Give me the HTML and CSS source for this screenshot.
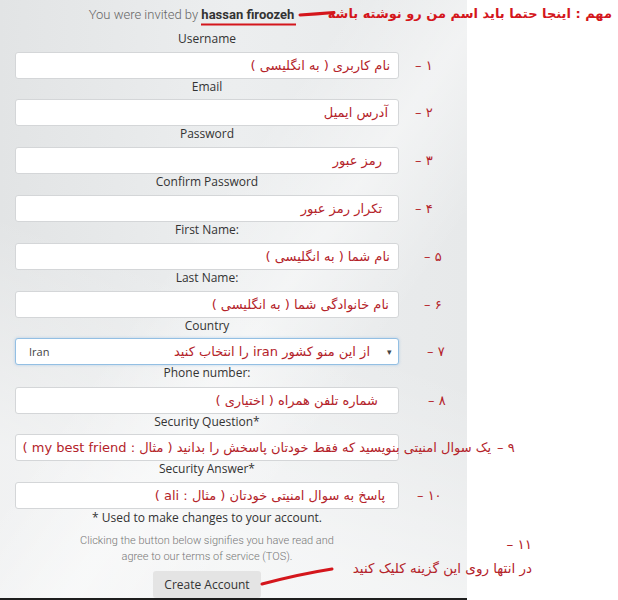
FILE: index.html
```html
<!DOCTYPE html>
<html lang="en">
<head>
    <meta charset="UTF-8">
    <meta name="viewport" content="width=device-width, initial-scale=1.0">
    <title>Register</title>
    <link rel="stylesheet" href="styles.css">
</head>
<body>

<div class="page">
    <div class="panel">
        <div class="form">
            <p class="invite">You were invited by <b>hassan firoozeh</b></p>

            <div class="field">
                <div class="label">Username</div>
                <div class="box"></div>
                <span class="note" style="right: 9px">نام کاربری ( به انگلیسی )</span>
                <span class="num" style="left: 400px">۱ –</span>
            </div>
            <div class="field">
                <div class="label tight">Email</div>
                <div class="box"></div>
                <span class="note" style="right: 11px">آدرس ایمیل</span>
                <span class="num" style="left: 400px">۲ –</span>
            </div>
            <div class="field">
                <div class="label">Password</div>
                <div class="box"></div>
                <span class="note" style="right: 17px">رمز عبور</span>
                <span class="num" style="left: 400px">۳ –</span>
            </div>
            <div class="field">
                <div class="label">Confirm Password</div>
                <div class="box"></div>
                <span class="note" style="right: 17px">تکرار رمز عبور</span>
                <span class="num" style="left: 400px">۴ –</span>
            </div>
            <div class="field">
                <div class="label">First Name:</div>
                <div class="box"></div>
                <span class="note" style="right: 9px">نام شما ( به انگلیسی )</span>
                <span class="num" style="left: 409px">۵ –</span>
            </div>
            <div class="field">
                <div class="label">Last Name:</div>
                <div class="box"></div>
                <span class="note" style="right: 10px">نام خانوادگی شما ( به انگلیسی )</span>
                <span class="num" style="left: 409px">۶ –</span>
            </div>
            <div class="field">
                <div class="label tight">Country</div>
                <div class="box select">
                    <span>Iran</span>
                    <span class="caret">▾</span>
                </div>
                <span class="note" style="right: 29px">از این منو کشور iran را انتخاب کنید</span>
                <span class="num" style="left: 412px">۷ –</span>
            </div>
            <div class="field">
                <div class="label loose">Phone number:</div>
                <div class="box"></div>
                <span class="note" style="right: 21px">شماره تلفن همراه ( اختیاری )</span>
                <span class="num" style="left: 413px">۸ –</span>
            </div>
            <div class="field">
                <div class="label tight">Security Question*</div>
                <div class="box"></div>
                <span class="note" style="right: -92px">یک سوال امنیتی بنویسید که فقط خودتان پاسخش را بدانید ( مثال : my best friend )</span>
                <span class="num" style="left: 482px">۹ –</span>
            </div>
            <div class="field">
                <div class="label">Security Answer*</div>
                <div class="box"></div>
                <span class="note" style="right: 14px">پاسخ به سوال امنیتی خودتان ( مثال : ali )</span>
                <span class="num" style="left: 402px">۱۰ –</span>
            </div>

            <p class="used">* Used to make changes to your account.</p>
            <p class="tos">Clicking the button below signifies you have read and<br>agree to our terms of service (TOS).</p>
            <div class="actions">
                <button class="create">Create Account</button>
            </div>
        </div>
    </div>

    <div class="top-note" dir="rtl">مهم : اینجا حتما باید اسم من رو نوشته باشه</div>
    <div class="end-note" dir="rtl">
        <div>۱۱ –</div>
        <div>در انتها روی این گزینه کلیک کنید</div>
    </div>

    <svg class="marks" width="618" height="600" viewBox="0 0 618 600">
        <path d="M201 24.5 L296 24.5" stroke="#d4161c" stroke-width="2.2" fill="none"/>
        <path d="M300 15 Q316 14 334 12.5" stroke="#d4161c" stroke-width="3" stroke-linecap="round" fill="none"/>
        <path d="M262 584 Q300 574 332 569" stroke="#d4161c" stroke-width="3" stroke-linecap="round" fill="none"/>
    </svg>
</div>

</body>
</html>
```

FILE: styles.css
```css
body {
    margin: 0;
    background: #fff;
    font-family: "Open Sans", Arial, sans-serif;
}
.page {
    position: relative;
    width: 618px;
    height: 600px;
    overflow: hidden;
}
.panel {
    width: 467px;
    height: 600px;
    box-sizing: border-box;
    border-bottom: 2px solid #1e1e1e;
    background:
        linear-gradient(125deg, rgba(255,255,255,0) 40%, rgba(255,255,255,0.45) 55%, rgba(255,255,255,0) 70%),
        linear-gradient(200deg, rgba(255,255,255,0) 50%, rgba(255,255,255,0.5) 80%),
        linear-gradient(90deg, #e2e4e5 0%, #eceeef 50%, #e7e9ea 100%);
}
.form {
    width: 384px;
    margin-left: 15px;
}
.invite {
    margin: 0;
    height: 31px;
    padding-right: 31px;
    line-height: 30px;
    text-align: center;
    font-family: Roboto, Arial, sans-serif;
    font-size: 13px;
    font-weight: 300;
    color: #666;
}
.invite b {
    font-weight: 700;
    color: #333;
}
.field {
    position: relative;
}
.label {
    height: 21px;
    line-height: 15px;
    text-align: center;
    font-size: 12px;
    color: #333;
}
.label.tight {
    height: 20px;
}
.label.loose {
    height: 22px;
}
.box {
    height: 27px;
    box-sizing: border-box;
    background: #fff;
    border: 1px solid #d4d6d8;
    border-radius: 3px;
}
.select {
    display: flex;
    justify-content: space-between;
    align-items: center;
    padding: 0 6px 0 13px;
    border-color: #93bfe3;
    box-shadow: 0 0 3px rgba(80, 150, 220, 0.35);
    font-size: 11px;
    color: #444;
}
.caret {
    font-size: 9px;
    color: #444;
}
.note,
.num {
    position: absolute;
    bottom: 4px;
    white-space: nowrap;
    font-family: "DejaVu Sans", sans-serif;
    font-size: 13px;
    line-height: 18px;
    color: #b4232a;
}
.note {
    direction: rtl;
}
.num {
    direction: rtl;
}
.used {
    margin: 0;
    line-height: 17px;
    text-align: center;
    font-size: 12px;
    color: #333;
}
.tos {
    margin: 7px 0 0;
    line-height: 16px;
    text-align: center;
    font-family: Roboto, Arial, sans-serif;
    font-size: 11px;
    font-weight: 300;
    color: #777;
}
.actions {
    display: flex;
    justify-content: center;
    margin-top: 6px;
}
.create {
    width: 108px;
    height: 27px;
    border: none;
    border-radius: 3px;
    background: #e4e4e4;
    font-family: "Open Sans", Arial, sans-serif;
    font-size: 12px;
    color: #333;
}
.top-note {
    position: absolute;
    top: 6px;
    right: 6px;
    font-family: "DejaVu Sans", sans-serif;
    font-size: 13px;
    font-weight: 700;
    color: #d4161c;
}
.end-note {
    position: absolute;
    top: 532px;
    left: 348px;
    width: 184px;
    font-family: "DejaVu Sans", sans-serif;
    font-size: 13.5px;
    line-height: 24px;
    color: #b4232a;
}
.marks {
    position: absolute;
    top: 0;
    left: 0;
    pointer-events: none;
}
```
